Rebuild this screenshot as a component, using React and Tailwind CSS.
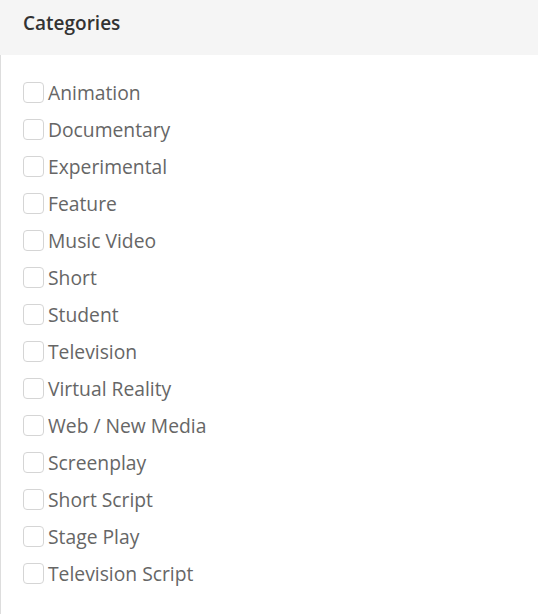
const items = [
  "Animation",
  "Documentary",
  "Experimental",
  "Feature",
  "Music Video",
  "Short",
  "Student",
  "Television",
  "Virtual Reality",
  "Web / New Media",
  "Screenplay",
  "Short Script",
  "Stage Play",
  "Television Script",
];

export default function App() {
  return (
    <div className="w-[538px] h-[614px] bg-white font-['Open_Sans',sans-serif] overflow-hidden">
      <div className="h-[55px] bg-[#f5f5f5] flex items-center px-[23px] pb-[8px]">
        <span className="text-[19px] font-semibold text-[#333]">Categories</span>
      </div>
      <div className="border-l border-[#ddd] h-[559px] pt-[19px]">
        {items.map((t) => (
          <label key={t} className="flex items-center h-[37px] pl-[22px]">
            <span className="w-[21px] h-[21px] border border-[#d5d5d5] rounded-[4px] bg-white shrink-0" />
            <span className="ml-[4px] text-[19.3px] text-[#666] leading-none">{t}</span>
          </label>
        ))}
      </div>
    </div>
  );
}
